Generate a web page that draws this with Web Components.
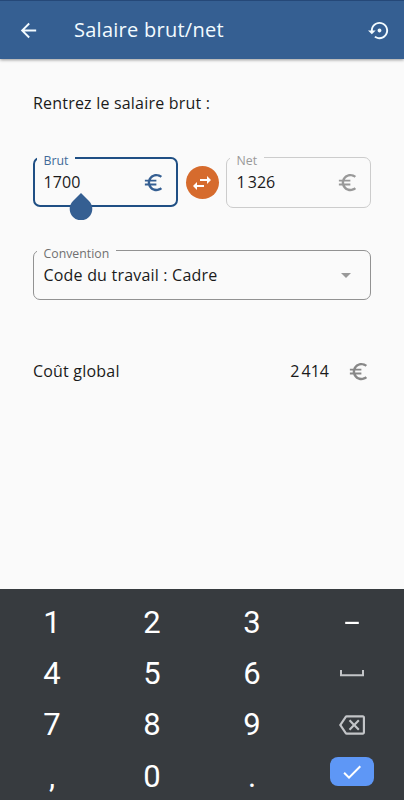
<!DOCTYPE html>
<html lang="fr">
<head>
<meta charset="utf-8">
<title>Salaire brut/net</title>
<style>
html,body{margin:0;height:100%;background:#fafafa}
body{font-family:"Open Sans","Liberation Sans",sans-serif;color:#1a1a1a;overflow:hidden}
</style>
</head>
<body>
<salary-app></salary-app>
<script>
const ICONS = {
  back: '<path d="M20 11H7.83l5.59-5.59L12 4l-8 8 8 8 1.41-1.41L7.83 13H20z"/>',
  restore: '<path d="M14 12c0-1.1-.9-2-2-2s-2 .9-2 2 .9 2 2 2 2-.9 2-2zm-2-9c-4.97 0-9 4.03-9 9H0l4 4 4-4H5c0-3.87 3.13-7 7-7s7 3.13 7 7-3.13 7-7 7c-1.51 0-2.91-.49-4.06-1.3l-1.42 1.44C8.04 20.3 9.94 21 12 21c4.97 0 9-4.03 9-9s-4.03-9-9-9z"/>',
  euro: '<path d="M15 18.5c-2.51 0-4.68-1.42-5.76-3.5H15v-2H8.58c-.05-.33-.08-.66-.08-1s.03-.67.08-1H15V9H9.24C10.32 6.92 12.5 5.5 15 5.5c1.61 0 3.09.59 4.23 1.57L21 5.3C19.41 3.87 17.3 3 15 3c-3.92 0-7.24 2.51-8.48 6H3v2h3.06c-.04.33-.06.66-.06 1s.02.67.06 1H3v2h3.52c1.24 3.49 4.56 6 8.48 6 2.31 0 4.41-.87 6-2.3l-1.78-1.77c-1.13.98-2.6 1.57-4.22 1.57z"/>',
  swap: '<path d="M6.99 11L3 15l3.99 4v-3H14v-2H6.99v-3zM21 9l-3.99-4v3H10v2h7.01v3L21 9z"/>',
  drop: '<path d="M7 10l5 5 5-5z"/>',
  minus: '<path d="M5.2 10.8h13.6v2.2H5.2z"/>',
  space: '<path d="M1 8v5.2h22V8" fill="none" stroke="currentColor" stroke-width="2"/>',
  erase: '<path d="M22 3H7c-.69 0-1.23.35-1.59.88L0 12l5.41 8.11c.36.53.9.89 1.59.89h15c1.1 0 2-.9 2-2V5c0-1.1-.9-2-2-2zm0 16H7.07L2.4 12l4.66-7H22v14zm-11.59-2L14 13.41 17.59 17 19 15.59 15.41 12 19 8.41 17.59 7 14 10.59 10.41 7 9 8.41 12.59 12 9 15.59z"/>',
  check: '<path d="M9 16.17L4.83 12l-1.42 1.41L9 19 21 7l-1.41-1.41z"/>'
};
function define(name, render){
  customElements.define(name, class extends HTMLElement{
    connectedCallback(){
      if(this.shadowRoot) return;
      this.attachShadow({mode:'open'}).innerHTML = render(this);
    }
  });
}
define('ui-icon', el => {
  const s = el.getAttribute('size') || 24;
  return `<style>:host{display:block;flex:none;width:${s}px;height:${s}px}svg{display:block;width:100%;height:100%;fill:currentColor}</style>
  <svg viewBox="0 0 24 24">${ICONS[el.getAttribute('name')]}</svg>`;
});
define('app-bar', () => `<style>
  :host{display:flex;align-items:center;box-sizing:border-box;height:59px;padding:1px 13.5px 1px 17px;flex:none;background:#355f92;color:#f3fbff;border-top:1px solid #254878;box-shadow:0 1px 3px #0006;position:relative}
  h1{flex:1;margin:0 0 0 34px;font-size:20px;font-weight:400;letter-spacing:.26px;line-height:28px;white-space:nowrap}
  </style><ui-icon name="back" size="23"></ui-icon><h1><slot></slot></h1><ui-icon name="restore" size="23"></ui-icon>`);
define('outlined-field', () => `<style>
  :host{display:flex;align-items:center;position:relative;box-sizing:border-box;height:50px;padding:0 12px 1px 9.5px;border:1px solid var(--line,#ccc);border-radius:7px}
  :host([focused]){border-width:2px;padding:0 11.5px 0 8.5px}
  .label{position:absolute;left:3px;top:-6px;height:17px;line-height:17px;padding:0 7px 0 6.5px;background:#fafafa;color:var(--label,#999);font-size:12.3px;letter-spacing:0;white-space:nowrap}
  :host([focused]) .label{left:2px;top:-7px}
  .value{flex:1;line-height:24px;white-space:nowrap}
  </style><span class="label"><slot name="label"></slot></span><span class="value"><slot></slot></span><slot name="end"></slot>`);
define('cursor-handle', () => `<style>:host{display:block;position:absolute;left:34px;top:33px;width:24px;height:28px}svg{display:block}</style>
  <svg width="24" height="28" viewBox="0 0 24 28"><path fill="#355f92" d="M12 1L20 9A11.3 11.3 0 1 1 4 9Z"/></svg>`);
define('swap-button', () => `<style>:host{display:grid;place-items:center;width:33px;height:33px;border-radius:50%;background:#d66b2d;color:#fff}</style><ui-icon name="swap" size="24"></ui-icon>`);
define('salary-form', () => `<style>
  :host{display:flex;flex-direction:column;flex:1;padding:33px 33px 0;font-size:16px;letter-spacing:.2px}
  p{margin:0;line-height:22px}
  .pair{display:grid;grid-template-columns:145px 33px 145px;column-gap:7.5px;align-items:center;margin-top:43px;height:50px;letter-spacing:.1px}
  .gross{--line:#1f4f84;--label:#416a98}.pair ui-icon.blue{color:#355f92}.grey{color:#999}
  .pair .net{height:51px;padding-right:11px}
  .pair .gross{align-self:start}
  .agreement{--line:#929292;--label:#707070;margin-top:43px}
  .total{display:flex;align-items:center;height:24px;margin-top:59px}
  .total span:first-child{flex:1}.total ui-icon{color:#888;margin-left:18px;margin-right:1px}
  </style>
  <p>Rentrez le salaire brut :</p>
  <div class="pair">
    <outlined-field class="gross" focused><span slot="label">Brut</span>1700<ui-icon slot="end" class="blue" name="euro" size="23"></ui-icon><cursor-handle slot="end"></cursor-handle></outlined-field>
    <swap-button></swap-button>
    <outlined-field class="net"><span slot="label">Net</span>1&#8239;326<ui-icon slot="end" class="grey" name="euro" size="23"></ui-icon></outlined-field>
  </div>
  <outlined-field class="agreement"><span slot="label">Convention</span>Code du travail : Cadre<ui-icon slot="end" name="drop" class="grey" size="24"></ui-icon></outlined-field>
  <div class="total"><span>Coût global</span><span>2&#8239;414</span><ui-icon name="euro" size="23"></ui-icon></div>`);
define('key-cap', () => `<style>:host{display:grid;place-items:center;color:#fff}</style><slot></slot>`);
define('number-pad', () => `<style>
  :host{display:grid;grid-template-columns:repeat(4,100px);grid-template-rows:repeat(4,51.3px);box-sizing:border-box;height:211px;flex:none;padding:8px 2px 0;background:#373b3f;font:400 31px/36px Roboto,sans-serif;overflow:hidden}
  .soft{color:#c3c5c8}
  .ok{display:grid;place-items:center;width:44px;height:29px;border-radius:8px;background:#5e97f6;transform:translateY(-5px)}
  </style>
  <key-cap>1</key-cap><key-cap>2</key-cap><key-cap>3</key-cap><key-cap><ui-icon name="minus"></ui-icon></key-cap>
  <key-cap>4</key-cap><key-cap>5</key-cap><key-cap>6</key-cap><key-cap><ui-icon class="soft" name="space"></ui-icon></key-cap>
  <key-cap>7</key-cap><key-cap>8</key-cap><key-cap>9</key-cap><key-cap><ui-icon class="soft" name="erase" size="26"></ui-icon></key-cap>
  <key-cap>,</key-cap><key-cap>0</key-cap><key-cap>.</key-cap><key-cap><div class="ok"><ui-icon name="check" size="24"></ui-icon></div></key-cap>`);
define('salary-app', () => `<style>:host{display:flex;flex-direction:column;width:404px;height:800px;background:#fafafa}</style>
  <app-bar>Salaire brut/net</app-bar><salary-form></salary-form><number-pad></number-pad>`);
</script>
</body>
</html>
